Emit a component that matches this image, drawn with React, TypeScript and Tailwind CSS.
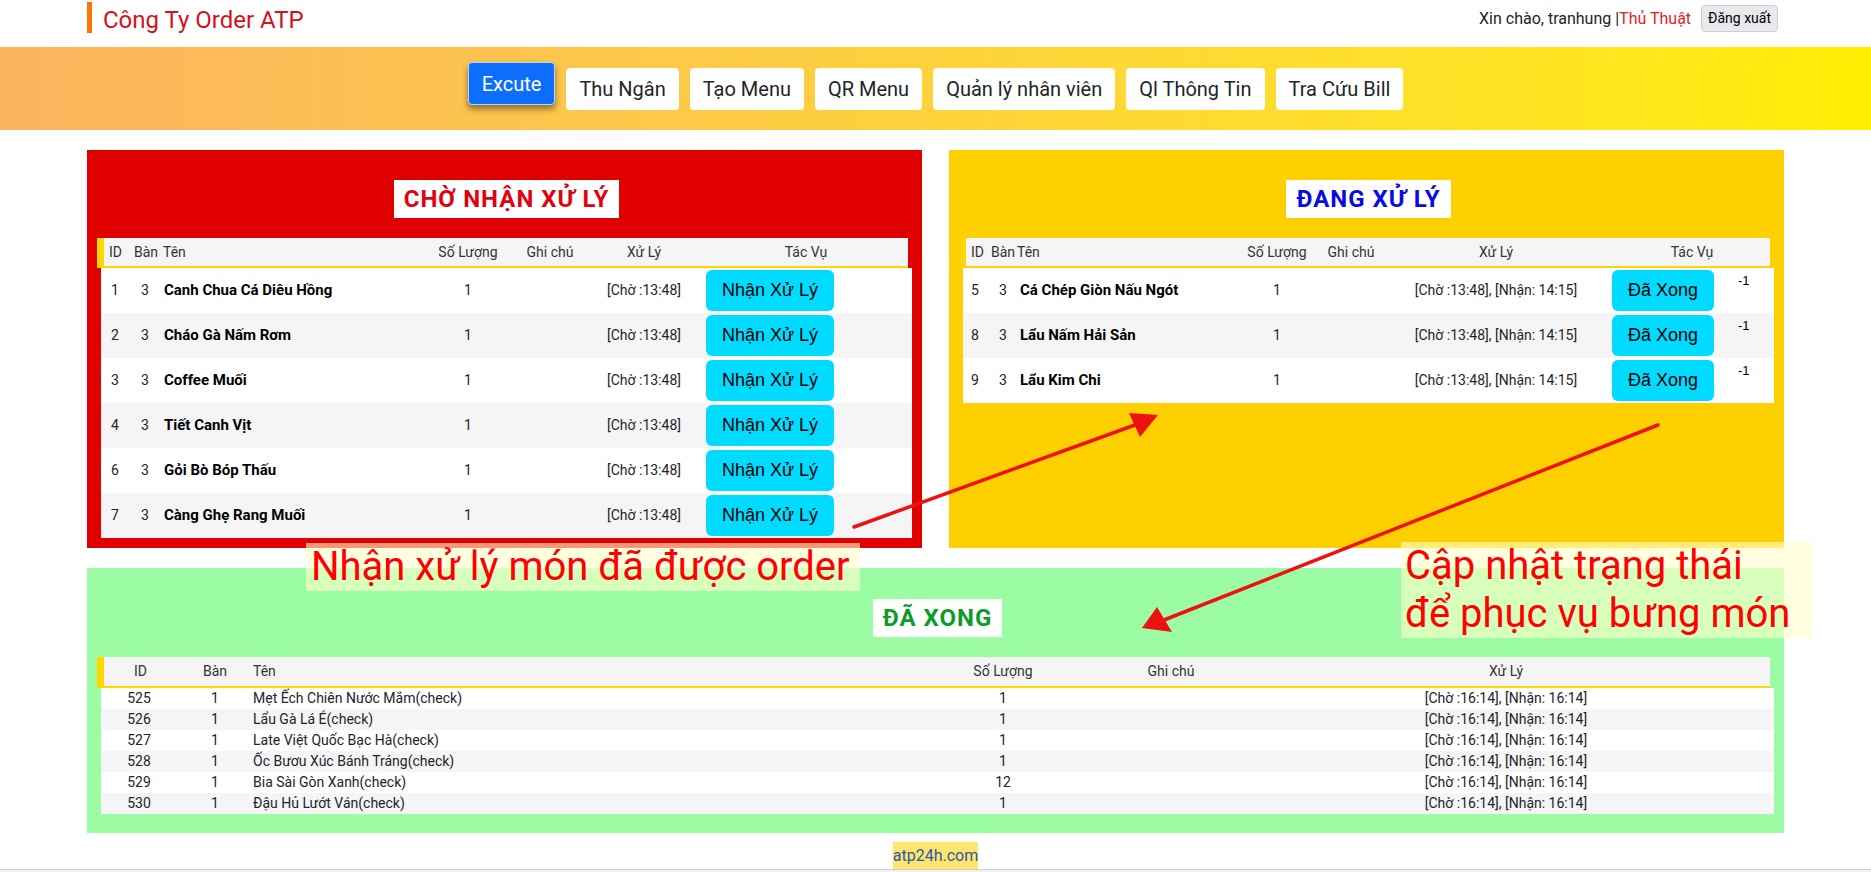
import React from "react";

type Pending = { id: number; ban: number; name: string; time: string };
type Done = { id: number; ban: number; name: string; qty: number; time: string };

const pending: Pending[] = [
  { id: 1, ban: 3, name: "Canh Chua Cá Diêu Hồng", time: "[Chờ :13:48]" },
  { id: 2, ban: 3, name: "Cháo Gà Nấm Rơm", time: "[Chờ :13:48]" },
  { id: 3, ban: 3, name: "Coffee Muối", time: "[Chờ :13:48]" },
  { id: 4, ban: 3, name: "Tiết Canh Vịt", time: "[Chờ :13:48]" },
  { id: 6, ban: 3, name: "Gỏi Bò Bóp Thấu", time: "[Chờ :13:48]" },
  { id: 7, ban: 3, name: "Càng Ghẹ Rang Muối", time: "[Chờ :13:48]" },
];

const processing: Pending[] = [
  { id: 5, ban: 3, name: "Cá Chép Giòn Nấu Ngót", time: "[Chờ :13:48], [Nhận: 14:15]" },
  { id: 8, ban: 3, name: "Lẩu Nấm Hải Sản", time: "[Chờ :13:48], [Nhận: 14:15]" },
  { id: 9, ban: 3, name: "Lẩu Kim Chi", time: "[Chờ :13:48], [Nhận: 14:15]" },
];

const done: Done[] = [
  { id: 525, ban: 1, name: "Mẹt Ếch Chiên Nước Mắm(check)", qty: 1, time: "[Chờ :16:14], [Nhận: 16:14]" },
  { id: 526, ban: 1, name: "Lẩu Gà Lá É(check)", qty: 1, time: "[Chờ :16:14], [Nhận: 16:14]" },
  { id: 527, ban: 1, name: "Late Việt Quốc Bạc Hà(check)", qty: 1, time: "[Chờ :16:14], [Nhận: 16:14]" },
  { id: 528, ban: 1, name: "Ốc Bươu Xúc Bánh Tráng(check)", qty: 1, time: "[Chờ :16:14], [Nhận: 16:14]" },
  { id: 529, ban: 1, name: "Bia Sài Gòn Xanh(check)", qty: 12, time: "[Chờ :16:14], [Nhận: 16:14]" },
  { id: 530, ban: 1, name: "Đậu Hủ Lướt Ván(check)", qty: 1, time: "[Chờ :16:14], [Nhận: 16:14]" },
];

const navItems = ["Thu Ngân", "Tạo Menu", "QR Menu", "Quản lý nhân viên", "Ql Thông Tin", "Tra Cứu Bill"];

const Panel: React.FC<{ className: string; titleClass: string; title: string; children: React.ReactNode }> = ({
  className,
  titleClass,
  title,
  children,
}) => (
  <div className={className}>
    <div className="flex justify-center">
      <div className={titleClass}>{title}</div>
    </div>
    <div className="mt-[20px]">{children}</div>
  </div>
);

const headCls =
  "-ml-[4px] mr-[4px] h-[30px] bg-[#f5f5f5] border-l-[7px] border-b-2 border-[#ffd700] grid items-center text-[14px] text-[#333]";

const App: React.FC = () => {
  return (
    <div className="relative min-h-[872px] bg-white font-['Roboto',sans-serif] text-[#212529]">
      {/* top bar */}
      <div className="mx-auto w-[1697px] h-[47px] flex justify-between items-start">
        <div className="mt-[2px] h-[31px] border-l-[5px] border-[#ff7500] pl-[11px] pt-[6px]">
          <span className="block text-[24px] leading-[24px] text-[#d4111b]">Công Ty Order ATP</span>
        </div>
        <div className="mt-[5px] mr-[6px] flex items-center text-[16px]">
          <span>Xin chào, tranhung |</span>
          <span className="text-[#e51c23]">Thủ Thuật</span>
          <button className="ml-[10px] h-[27px] px-[6px] rounded-[4px] border border-[#cfcfcf] bg-[#e9e9ed] text-[14px] text-black">
            Đăng xuất
          </button>
        </div>
      </div>

      {/* nav */}
      <div className="h-[83px] bg-linear-to-r from-[#fbb35e] via-[#fdd23a] to-[#ffee00] flex items-center justify-center gap-[11px]">
        <button className="h-[43px] px-[13px] -translate-y-[5px] rounded-[4px] border border-[#b6d4fe] bg-[#0d6efd] text-white text-[20px] shadow-[0_4px_6px_rgba(0,0,0,0.45)]">
          Excute
        </button>
        {navItems.map((item) => (
          <button key={item} className="h-[42px] px-[13px] rounded-[4px] bg-white text-[20px] text-[#212529]">
            {item}
          </button>
        ))}
      </div>

      <div className="mx-auto w-[1697px] pt-[20px]">
        <div className="grid grid-cols-2 gap-[27px]">
          <Panel
            className="bg-[#e00000] pt-[30px] pb-[10px] pl-[14px] pr-[10px]"
            titleClass="bg-white h-[38px] px-[10px] flex items-center text-[24px] tracking-[1px] font-bold text-[#e3000f]"
            title="CHỜ NHẬN XỬ LÝ"
          >
            <div className={`${headCls} grid-cols-[25px_30px_270px_78px_86px_102px_1fr]`}>
              <span className="pl-[5px]">ID</span>
              <span className="pl-[5px]">Bàn</span>
              <span className="pl-[4px]">Tên</span>
              <span className="text-center">Số Lượng</span>
              <span className="text-center">Ghi chú</span>
              <span className="text-center">Xử Lý</span>
              <span className="text-center pl-[9px]">Tác Vụ</span>
            </div>
            {pending.map((row, i) => (
              <div
                key={row.id}
                className={`grid grid-cols-[30px_28px_270px_78px_86px_102px_1fr] h-[45px] items-center text-[14px] ${
                  i % 2 ? "bg-[#f5f5f5]" : "bg-white"
                }`}
              >
                <span className="pl-[10px]">{row.id}</span>
                <span className="pl-[10px]">{row.ban}</span>
                <span className="pl-[5px] text-[15px] font-bold text-black">{row.name}</span>
                <span className="text-center">1</span>
                <span />
                <span className="text-center">{row.time}</span>
                <div className="pl-[11px]">
                  <button className="h-[41px] px-[16px] rounded-[6px] bg-[#00dbff] text-[18px] text-black font-['Liberation_Sans',Arial,sans-serif]">
                    Nhận Xử Lý
                  </button>
                </div>
              </div>
            ))}
          </Panel>

          <Panel
            className="bg-[#ffd000] pt-[30px] pb-[10px] pl-[14px] pr-[10px]"
            titleClass="bg-white h-[38px] px-[10px] flex items-center text-[24px] tracking-[1px] font-bold text-[#0a0ae6]"
            title="ĐANG XỬ LÝ"
          >
            <div className={`${headCls} grid-cols-[23px_22px_228px_76px_72px_218px_1fr]`}>
              <span className="pl-[5px]">ID</span>
              <span className="pl-[2px]">Bàn</span>
              <span className="pl-[6px]">Tên</span>
              <span className="text-center">Số Lượng</span>
              <span className="text-center">Ghi chú</span>
              <span className="text-center">Xử Lý</span>
              <span className="text-center pl-[9px]">Tác Vụ</span>
            </div>
            {processing.map((row, i) => (
              <div
                key={row.id}
                className={`grid grid-cols-[26px_26px_224px_76px_72px_218px_114px_1fr] h-[45px] items-center text-[14px] ${
                  i % 2 ? "bg-[#f5f5f5]" : "bg-white"
                }`}
              >
                <span className="pl-[8px]">{row.id}</span>
                <span className="pl-[10px]">{row.ban}</span>
                <span className="pl-[5px] text-[15px] font-bold text-black">{row.name}</span>
                <span className="text-center">1</span>
                <span />
                <span className="text-center">{row.time}</span>
                <div className="pl-[7px]">
                  <button className="h-[41px] px-[16px] rounded-[6px] bg-[#00dbff] text-[18px] text-black font-['Liberation_Sans',Arial,sans-serif]">
                    Đã Xong
                  </button>
                </div>
                <span className="self-start pt-[3px] pl-[19px] text-[13px] text-black font-['Liberation_Sans',Arial,sans-serif]">
                  -1
                </span>
              </div>
            ))}
          </Panel>
        </div>

        <Panel
          className="mt-[20px] bg-[#9bfca3] pt-[31px] pb-[19px] pl-[14px] pr-[10px]"
          titleClass="bg-white h-[38px] px-[10px] flex items-center text-[24px] tracking-[1px] font-bold text-[#0e9b2d]"
          title="ĐÃ XONG"
        >
          <div className={`${headCls} h-[31px] grid-cols-[73px_76px_676px_148px_188px_482px_1fr]`}>
            <span className="text-center">ID</span>
            <span className="text-center">Bàn</span>
            <span>Tên</span>
            <span className="text-center">Số Lượng</span>
            <span className="text-center">Ghi chú</span>
            <span className="text-center">Xử Lý</span>
            <span />
          </div>
          {done.map((row, i) => (
            <div
              key={row.id}
              className={`grid grid-cols-[76px_76px_676px_148px_188px_482px_1fr] h-[21px] items-center text-[14px] ${
                i % 2 ? "bg-[#f5f5f5]" : "bg-white"
              }`}
            >
              <span className="text-center">{row.id}</span>
              <span className="text-center">{row.ban}</span>
              <span>{row.name}</span>
              <span className="text-center">{row.qty}</span>
              <span />
              <span className="text-center">{row.time}</span>
              <span />
            </div>
          ))}
        </Panel>
      </div>

      <div className="mt-[9px] flex justify-center">
        <a className="h-[27px] leading-[27px] bg-[#ffe46e] text-[16px] text-[#2b5aa8]">atp24h.com</a>
      </div>
      <div className="h-[4px] border-t border-[#cfcfcf] bg-[#efefef]" />

      {/* annotations */}
      <div className="absolute left-[306px] top-[543px] w-[554px] h-[48px] bg-[rgba(255,255,204,0.6)] pl-[5px] text-[40px] leading-[48px] text-[#ff0000] whitespace-nowrap">
        Nhận xử lý món đã được order
      </div>
      <div className="absolute left-[1401px] top-[542px] w-[411px] h-[96px] bg-[rgba(255,255,204,0.6)] pl-[4px] text-[40px] leading-[48px] text-[#ff0000] whitespace-nowrap">
        Cập nhật trạng thái
        <br />
        để phục vụ bưng món
      </div>
      <svg className="absolute left-0 top-0 pointer-events-none" width="1871" height="872" viewBox="0 0 1871 872">
        <line x1="854" y1="527" x2="1135" y2="425" stroke="#ee1111" strokeWidth="3.5" strokeLinecap="round" />
        <polygon points="1158,415 1129,413 1140,437" fill="#ee1111" />
        <line x1="1658" y1="425" x2="1164" y2="620" stroke="#ee1111" strokeWidth="3.5" strokeLinecap="round" />
        <polygon points="1142,628 1157,607 1172,632" fill="#ee1111" />
      </svg>
    </div>
  );
};

export default App;
